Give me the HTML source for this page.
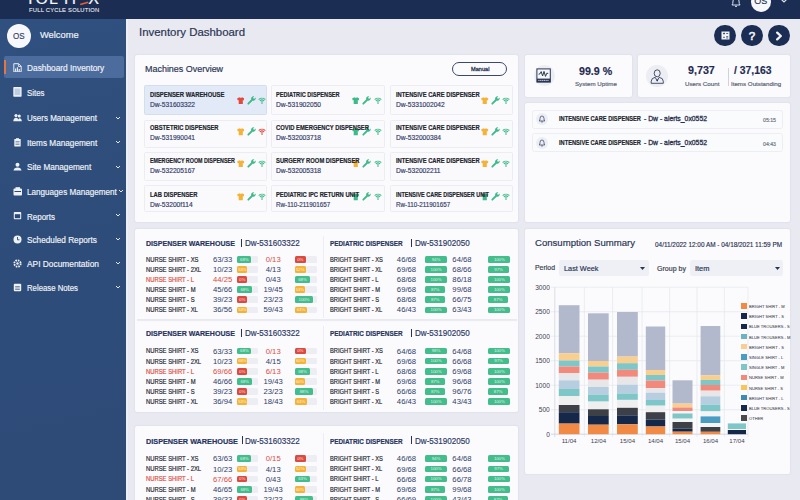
<!DOCTYPE html><html><head><meta charset="utf-8"><style>
*{box-sizing:border-box;margin:0;padding:0}
html,body{width:800px;height:500px;overflow:hidden}
body{font-family:"Liberation Sans",sans-serif;background:#e8e9f1;position:relative;color:#2a3553}
.a{position:absolute;white-space:nowrap;-webkit-text-stroke:0.18px currentColor}
.card{position:absolute;background:#fbfbfd;border-radius:2px;box-shadow:0 0 2px rgba(170,175,200,.35)}
.nv{position:absolute;color:#eef2f8;white-space:nowrap;line-height:1}
.tile{position:absolute;border-radius:1.5px;background:#fafafc;border:1px solid #ebedf2}
.tn{position:absolute;font-weight:bold;color:#262a33;white-space:nowrap;line-height:1}
.ti{position:absolute;color:#36406a;white-space:nowrap;line-height:1}
.rw{position:absolute;white-space:nowrap;line-height:1;color:#2c2f3a}
.nm{position:absolute;white-space:nowrap;line-height:1;color:#33406a;text-align:center}
.tr{position:absolute;height:6.5px;border-radius:1.5px;background:#eceef3}
.bd{position:absolute;height:6.5px;border-radius:1.5px;color:rgba(255,255,255,.85);font-size:4.4px;line-height:6.5px;text-align:center;overflow:hidden;letter-spacing:-0.1px;padding-top:0.6px}
.g{background:#42bd8b}.o{background:#f4b237}.r{background:#da4a3f}
.lg{position:absolute;width:5px;height:5px}
.lt{position:absolute;font-size:4.1px;color:#2a2d3a;white-space:nowrap;line-height:1;letter-spacing:-0.05px;-webkit-text-stroke:0.1px #2a2d3a}
</style></head><body>
<div class="a" style="left:0;top:0;width:800px;height:19px;background:#1b2d53"></div>
<div class="a" style="left:28.16px;top:-9.04px;font-size:16.00px;line-height:16.00px;color:#f4f6fa;">P</div>
<div class="a" style="left:35.53px;top:-9.04px;font-size:16.00px;line-height:16.00px;color:#f4f6fa;">O</div>
<div class="a" style="left:49.05px;top:-9.04px;font-size:16.00px;line-height:16.00px;color:#f4f6fa;">L</div>
<div class="a" style="left:60.66px;top:-9.04px;font-size:16.00px;line-height:16.00px;color:#f4f6fa;">Y</div>
<div class="a" style="left:68.91px;top:-9.04px;font-size:16.00px;line-height:16.00px;color:#f4f6fa;">T</div>
<div class="a" style="left:88.16px;top:-9.04px;font-size:16.00px;line-height:16.00px;color:#f4f6fa;">X</div>
<svg class="a" style="left:79px;top:0" width="11" height="6" viewBox="0 0 11 6"><path d="M1.2 4.6 L9.2 2.2" stroke="#e8602a" stroke-width="1.6"/></svg>
<div class="a" style="left:29.00px;top:8.19px;font-size:5.80px;line-height:5.80px;color:#e6e9f0;letter-spacing:0.23px;-webkit-text-stroke:0.1px #e6e9f0;">FULL CYCLE SOLUTION</div>
<svg class="a" style="left:730px;top:-4px" width="12" height="12" viewBox="0 0 12 12"><path d="M2 9 Q3 8 3 5 Q3 1.5 6 1.5 Q9 1.5 9 5 Q9 8 10 9 Z M5 10 Q6 11.5 7 10" fill="none" stroke="#dfe4ee" stroke-width="1"/></svg>
<div class="a" style="left:751px;top:-8px;width:20px;height:20px;border-radius:50%;background:#f7f8fb"></div>
<div class="a" style="left:754.20px;top:-3.32px;font-size:9.00px;line-height:9.00px;color:#2a3553;">OS</div>
<svg class="a" style="left:780px;top:-2px" width="8" height="6" viewBox="0 0 8 6"><path d="M1 1 L4 4 L7 1" fill="none" stroke="#dfe4ee" stroke-width="1.2"/></svg>
<div class="a" style="left:0;top:19px;width:126px;height:481px;background:linear-gradient(165deg,#30507f 0%,#2e4c79 50%,#2e4b78 100%)"></div>
<div class="a" style="left:126px;top:19px;width:2px;height:481px;background:#eff0f5"></div>
<div class="a" style="left:6.8px;top:24.4px;width:24px;height:24px;border-radius:50%;background:#f7f8fb"></div>
<div class="a" style="left:12.80px;top:32.76px;font-size:8.20px;line-height:8.20px;color:#3a4368;transform:scale(0.9791,1.0000);transform-origin:0 0;">OS</div>
<div class="a" style="left:40.40px;top:31.40px;font-size:9.10px;line-height:9.10px;color:#eef2f8;transform:scale(1.0222,1.0000);transform-origin:0 0;">Welcome</div>
<div class="a" style="left:4px;top:55.5px;width:120px;height:22.5px;border-radius:2px;background:#4b6c9d"></div>
<div class="a" style="left:4px;top:59.5px;width:1.6px;height:14px;background:#e8763a"></div>
<div class="a" style="left:26.90px;top:63.77px;font-size:8.30px;line-height:8.30px;color:#eef2f8;transform:scale(1.0032,1.0000);transform-origin:0 0;">Dashboard Inventory</div>
<svg class="a" style="left:13px;top:62.8px" width="9" height="9.5" viewBox="0 0 9 9.5"><path d="M0.8 8.8 V0.7 H5.6 L8.2 3.3 V8.8 Z" fill="none" stroke="#eef2f8" stroke-width="0.95"/><path d="M5.4 0.8 V3.5 H8.1" fill="none" stroke="#eef2f8" stroke-width="0.8"/><path d="M2.6 8.6 V5.5 M4.4 8.6 V4.2 M6.2 8.6 V6" stroke="#eef2f8" stroke-width="1.1"/></svg>
<div class="a" style="left:26.90px;top:89.47px;font-size:8.30px;line-height:8.30px;color:#eef2f8;transform:scale(0.9430,1.0000);transform-origin:0 0;">Sites</div>
<svg class="a" style="left:13px;top:87.2px" width="9" height="10" viewBox="0 0 9 10"><rect x="0.3" y="0.1" width="8.3" height="9.6" rx="0.7" fill="#eef2f8"/><rect x="1.6" y="1.5" width="5.7" height="6.6" fill="#c3cde0"/></svg>
<div class="a" style="left:26.90px;top:114.47px;font-size:8.30px;line-height:8.30px;color:#eef2f8;transform:scale(0.9665,1.0000);transform-origin:0 0;">Users Management</div>
<svg class="a" style="left:13px;top:113.1px" width="9" height="9" viewBox="0 0 9 9"><circle cx="3" cy="2.6" r="1.6" fill="#eef2f8"/><circle cx="6.3" cy="3" r="1.5" fill="#eef2f8"/><path d="M0.3 8.3 Q0.5 4.8 3 4.8 Q5.5 4.8 5.8 8.3 Z M5 8.3 Q5.5 5.2 6.5 5.2 Q8.6 5.2 8.8 8.3Z" fill="#eef2f8"/></svg>
<svg class="a" style="left:114.5px;top:115.6px" width="6" height="4" viewBox="0 0 6 4"><path d="M1 1 L3 3 L5 1" fill="none" stroke="#e6ebf3" stroke-width="1"/></svg>
<div class="a" style="left:26.90px;top:139.37px;font-size:8.30px;line-height:8.30px;color:#eef2f8;transform:scale(0.9881,1.0000);transform-origin:0 0;">Items Management</div>
<svg class="a" style="left:13px;top:137.9px" width="9" height="9" viewBox="0 0 9 9"><rect x="1.3" y="1" width="6.4" height="7.6" rx="0.6" fill="#eef2f8"/><rect x="3" y="0.2" width="3" height="1.5" fill="#eef2f8"/><path d="M2.5 3.5H6.5M2.5 5H6.5M2.5 6.5H6.5" stroke="#2c4a79" stroke-width="0.5"/></svg>
<svg class="a" style="left:114.5px;top:140.4px" width="6" height="4" viewBox="0 0 6 4"><path d="M1 1 L3 3 L5 1" fill="none" stroke="#e6ebf3" stroke-width="1"/></svg>
<div class="a" style="left:26.90px;top:163.17px;font-size:8.30px;line-height:8.30px;color:#eef2f8;transform:scale(0.9869,1.0000);transform-origin:0 0;">Site Management</div>
<svg class="a" style="left:13px;top:162.1px" width="9" height="9" viewBox="0 0 9 9"><circle cx="4.5" cy="2.8" r="2" fill="#eef2f8"/><path d="M0.5 8.5 Q1 5.5 4.5 5.5 Q8 5.5 8.5 8.5Z" fill="#eef2f8"/></svg>
<svg class="a" style="left:114.5px;top:164.6px" width="6" height="4" viewBox="0 0 6 4"><path d="M1 1 L3 3 L5 1" fill="none" stroke="#e6ebf3" stroke-width="1"/></svg>
<div class="a" style="left:26.90px;top:187.67px;font-size:8.30px;line-height:8.30px;color:#eef2f8;transform:scale(0.9790,1.0000);transform-origin:0 0;">Languages Management</div>
<svg class="a" style="left:13px;top:186.7px" width="10" height="9" viewBox="0 0 10 9"><rect x="0.5" y="1.5" width="8.5" height="7" rx="1" fill="#eef2f8"/><rect x="2.5" y="0.2" width="4.5" height="2" fill="#eef2f8"/><rect x="1.5" y="4" width="6.5" height="1" fill="#2c4a79"/></svg>
<svg class="a" style="left:117.5px;top:189.2px" width="6" height="4" viewBox="0 0 6 4"><path d="M1 1 L3 3 L5 1" fill="none" stroke="#e6ebf3" stroke-width="1"/></svg>
<div class="a" style="left:26.90px;top:212.87px;font-size:8.30px;line-height:8.30px;color:#eef2f8;transform:scale(0.9634,1.0000);transform-origin:0 0;">Reports</div>
<svg class="a" style="left:13px;top:210.7px" width="9" height="9" viewBox="0 0 9 9"><rect x="0.8" y="1" width="7.4" height="7.2" rx="0.8" fill="#eef2f8"/><rect x="1.8" y="3.2" width="5.4" height="4" fill="#2c4a79"/></svg>
<svg class="a" style="left:114.5px;top:213.2px" width="6" height="4" viewBox="0 0 6 4"><path d="M1 1 L3 3 L5 1" fill="none" stroke="#e6ebf3" stroke-width="1"/></svg>
<div class="a" style="left:26.90px;top:236.27px;font-size:8.30px;line-height:8.30px;color:#eef2f8;transform:scale(0.9916,1.0000);transform-origin:0 0;">Scheduled Reports</div>
<svg class="a" style="left:13px;top:234.9px" width="9" height="9" viewBox="0 0 9 9"><circle cx="4.5" cy="4.5" r="4" fill="#eef2f8"/><path d="M4.5 2 V4.8 H6.5" fill="none" stroke="#2c4a79" stroke-width="0.9"/></svg>
<svg class="a" style="left:114.5px;top:237.4px" width="6" height="4" viewBox="0 0 6 4"><path d="M1 1 L3 3 L5 1" fill="none" stroke="#e6ebf3" stroke-width="1"/></svg>
<div class="a" style="left:26.90px;top:260.27px;font-size:8.30px;line-height:8.30px;color:#eef2f8;transform:scale(1.0068,1.0000);transform-origin:0 0;">API Documentation</div>
<svg class="a" style="left:13px;top:258.9px" width="9" height="9" viewBox="0 0 9 9"><circle cx="4.5" cy="4.5" r="3.2" fill="none" stroke="#eef2f8" stroke-width="1.8" stroke-dasharray="1.6 0.9"/><circle cx="4.5" cy="4.5" r="1.2" fill="#eef2f8"/></svg>
<svg class="a" style="left:114.5px;top:261.4px" width="6" height="4" viewBox="0 0 6 4"><path d="M1 1 L3 3 L5 1" fill="none" stroke="#e6ebf3" stroke-width="1"/></svg>
<div class="a" style="left:26.90px;top:284.27px;font-size:8.30px;line-height:8.30px;color:#eef2f8;transform:scale(0.9368,1.0000);transform-origin:0 0;">Release Notes</div>
<svg class="a" style="left:13px;top:282.9px" width="9" height="9" viewBox="0 0 9 9"><rect x="0.8" y="0.8" width="7.4" height="7.4" rx="1" fill="#eef2f8"/><path d="M2.2 3.5H6.8M2.2 5H6.8M2.2 6.5H6.8" stroke="#2c4a79" stroke-width="0.6"/></svg>
<svg class="a" style="left:114.5px;top:285.4px" width="6" height="4" viewBox="0 0 6 4"><path d="M1 1 L3 3 L5 1" fill="none" stroke="#e6ebf3" stroke-width="1"/></svg>
<div class="a" style="left:139.20px;top:27.39px;font-size:11.00px;line-height:11.00px;color:#2a3553;transform:scale(1.0380,1.0000);transform-origin:0 0;">Inventory Dashboard</div>
<div class="a" style="left:714.2px;top:24.8px;width:21.6px;height:21.6px;border-radius:50%;background:#1b2d53"></div>
<div class="a" style="left:741.2px;top:24.8px;width:21.6px;height:21.6px;border-radius:50%;background:#1b2d53"></div>
<div class="a" style="left:768.2px;top:24.8px;width:21.6px;height:21.6px;border-radius:50%;background:#1b2d53"></div>
<svg class="a" style="left:720.5px;top:31px" width="9" height="9" viewBox="0 0 9 9"><rect x="0.5" y="0.5" width="8" height="8" fill="#f2f4f8"/><path d="M2 2.5H4M3 1.5V3.5M5.2 2.5H7.2M2 6.3L4 6.3M5.2 5.6H7.2M5.2 7H7.2" stroke="#1b2d53" stroke-width="0.7"/></svg>
<div class="a" style="left:748.80px;top:31.07px;font-size:11.50px;line-height:11.50px;color:#f2f4f8;-webkit-text-stroke:0.6px #f2f4f8;">?</div>
<svg class="a" style="left:774px;top:30.5px" width="10" height="10" viewBox="0 0 10 10"><path d="M3.2 1.6 L6.8 5 L3.2 8.4" fill="none" stroke="#f2f4f8" stroke-width="2.3" stroke-linecap="round" stroke-linejoin="round"/></svg>
<div class="card" style="left:135px;top:55.3px;width:383px;height:166.5px"></div>
<div class="a" style="left:144.70px;top:64.87px;font-size:8.90px;line-height:8.90px;color:#2a3553;transform:scale(1.0083,1.0000);transform-origin:0 0;">Machines Overview</div>
<div class="a" style="left:452.2px;top:62.2px;width:54.6px;height:13.6px;border-radius:7px;border:1px solid #3b4671"></div>
<div class="a" style="left:470.80px;top:66.69px;font-size:5.80px;line-height:5.80px;color:#2a3553;transform:scale(0.9673,1.0000);transform-origin:0 0;-webkit-text-stroke:0.3px #2a3553;">Manual</div>
<div class="tile" style="left:144px;top:85.2px;width:123.2px;height:29.8px;background:#e2eaf7;border-color:#d3def0"></div>
<svg class="a" style="left:236.70px;top:96.75px" width="7.5" height="7.5" viewBox="0 0 8 8"><path d="M2.6 0.3 L0.1 1.7 L0.9 3.7 L1.8 3.3 V7.8 H6.2 V3.3 L7.1 3.7 L7.9 1.7 L5.4 0.3 Q4 1.5 2.6 0.3Z" fill="#e04a3f"/></svg>
<svg class="a" style="left:246.70px;top:96.00px" width="9" height="9" viewBox="0 0 9 9"><path d="M1.3 7.7 L5 4" stroke="#3dba89" stroke-width="1.8" stroke-linecap="round"/><path d="M4.3 3.4 A2.3 2.3 0 0 1 7.3 0.4 L6 1.8 L7.1 2.9 L8.5 1.6 A2.3 2.3 0 0 1 5.5 4.6Z" fill="#3dba89"/></svg>
<svg class="a" style="left:257.70px;top:97.10px" width="8" height="7" viewBox="0 0 8 7"><path d="M0.7 2.6 A4.8 4.8 0 0 1 7.3 2.6" fill="none" stroke="#3dba89" stroke-width="1.1"/><path d="M1.9 3.9 A3 3 0 0 1 6.1 3.9" fill="none" stroke="#3dba89" stroke-width="1.1"/><path d="M3 5.1 A1.4 1.4 0 0 1 5 5.1" fill="none" stroke="#3dba89" stroke-width="1.1"/><circle cx="4" cy="6.3" r="0.7" fill="#3dba89"/></svg>
<div class="a" style="left:150.30px;top:91.91px;font-size:6.60px;line-height:6.60px;color:#23262e;font-weight:bold;transform:scale(0.8937,1.0000);transform-origin:0 0;">DISPENSER WAREHOUSE</div>
<div class="a" style="left:150.30px;top:101.32px;font-size:7.30px;line-height:7.30px;color:#35406b;transform:scale(0.9100,1.0000);transform-origin:0 0;">Dw-531603322</div>
<div class="tile" style="left:270.5px;top:85.2px;width:114px;height:29.8px"></div>
<svg class="a" style="left:351.50px;top:96.75px" width="7.5" height="7.5" viewBox="0 0 8 8"><path d="M2.6 0.3 L0.1 1.7 L0.9 3.7 L1.8 3.3 V7.8 H6.2 V3.3 L7.1 3.7 L7.9 1.7 L5.4 0.3 Q4 1.5 2.6 0.3Z" fill="#3dba89"/></svg>
<svg class="a" style="left:361.80px;top:96.00px" width="9" height="9" viewBox="0 0 9 9"><path d="M1.3 7.7 L5 4" stroke="#3dba89" stroke-width="1.8" stroke-linecap="round"/><path d="M4.3 3.4 A2.3 2.3 0 0 1 7.3 0.4 L6 1.8 L7.1 2.9 L8.5 1.6 A2.3 2.3 0 0 1 5.5 4.6Z" fill="#3dba89"/></svg>
<svg class="a" style="left:373.70px;top:97.10px" width="8" height="7" viewBox="0 0 8 7"><path d="M0.7 2.6 A4.8 4.8 0 0 1 7.3 2.6" fill="none" stroke="#3dba89" stroke-width="1.1"/><path d="M1.9 3.9 A3 3 0 0 1 6.1 3.9" fill="none" stroke="#3dba89" stroke-width="1.1"/><path d="M3 5.1 A1.4 1.4 0 0 1 5 5.1" fill="none" stroke="#3dba89" stroke-width="1.1"/><circle cx="4" cy="6.3" r="0.7" fill="#3dba89"/></svg>
<div class="a" style="left:275.80px;top:91.91px;font-size:6.60px;line-height:6.60px;color:#23262e;font-weight:bold;transform:scale(0.8487,1.0000);transform-origin:0 0;">PEDIATRIC DISPENSER</div>
<div class="a" style="left:275.80px;top:101.32px;font-size:7.30px;line-height:7.30px;color:#35406b;transform:scale(0.9100,1.0000);transform-origin:0 0;">Dw-531902050</div>
<div class="tile" style="left:389.5px;top:85.2px;width:123px;height:29.8px"></div>
<svg class="a" style="left:481.10px;top:96.75px" width="7.5" height="7.5" viewBox="0 0 8 8"><path d="M2.6 0.3 L0.1 1.7 L0.9 3.7 L1.8 3.3 V7.8 H6.2 V3.3 L7.1 3.7 L7.9 1.7 L5.4 0.3 Q4 1.5 2.6 0.3Z" fill="#f4b237"/></svg>
<svg class="a" style="left:491.30px;top:96.00px" width="9" height="9" viewBox="0 0 9 9"><path d="M1.3 7.7 L5 4" stroke="#3dba89" stroke-width="1.8" stroke-linecap="round"/><path d="M4.3 3.4 A2.3 2.3 0 0 1 7.3 0.4 L6 1.8 L7.1 2.9 L8.5 1.6 A2.3 2.3 0 0 1 5.5 4.6Z" fill="#3dba89"/></svg>
<svg class="a" style="left:501.70px;top:97.10px" width="8" height="7" viewBox="0 0 8 7"><path d="M0.7 2.6 A4.8 4.8 0 0 1 7.3 2.6" fill="none" stroke="#3dba89" stroke-width="1.1"/><path d="M1.9 3.9 A3 3 0 0 1 6.1 3.9" fill="none" stroke="#3dba89" stroke-width="1.1"/><path d="M3 5.1 A1.4 1.4 0 0 1 5 5.1" fill="none" stroke="#3dba89" stroke-width="1.1"/><circle cx="4" cy="6.3" r="0.7" fill="#3dba89"/></svg>
<div class="a" style="left:395.80px;top:91.91px;font-size:6.60px;line-height:6.60px;color:#23262e;font-weight:bold;transform:scale(0.8783,1.0000);transform-origin:0 0;">INTENSIVE CARE DISPENSER</div>
<div class="a" style="left:395.80px;top:101.32px;font-size:7.30px;line-height:7.30px;color:#35406b;transform:scale(0.9100,1.0000);transform-origin:0 0;">Dw-5331002042</div>
<div class="tile" style="left:144px;top:119.5px;width:123.2px;height:28.6px"></div>
<svg class="a" style="left:236.70px;top:128.00px" width="7.5" height="7.5" viewBox="0 0 8 8"><path d="M2.6 0.3 L0.1 1.7 L0.9 3.7 L1.8 3.3 V7.8 H6.2 V3.3 L7.1 3.7 L7.9 1.7 L5.4 0.3 Q4 1.5 2.6 0.3Z" fill="#f4b237"/></svg>
<svg class="a" style="left:246.70px;top:127.25px" width="9" height="9" viewBox="0 0 9 9"><path d="M1.3 7.7 L5 4" stroke="#3dba89" stroke-width="1.8" stroke-linecap="round"/><path d="M4.3 3.4 A2.3 2.3 0 0 1 7.3 0.4 L6 1.8 L7.1 2.9 L8.5 1.6 A2.3 2.3 0 0 1 5.5 4.6Z" fill="#3dba89"/></svg>
<svg class="a" style="left:257.70px;top:128.35px" width="8" height="7" viewBox="0 0 8 7"><path d="M0.7 2.6 A4.8 4.8 0 0 1 7.3 2.6" fill="none" stroke="#e04a3f" stroke-width="1.1"/><path d="M1.9 3.9 A3 3 0 0 1 6.1 3.9" fill="none" stroke="#e04a3f" stroke-width="1.1"/><path d="M3 5.1 A1.4 1.4 0 0 1 5 5.1" fill="none" stroke="#e04a3f" stroke-width="1.1"/><circle cx="4" cy="6.3" r="0.7" fill="#e04a3f"/></svg>
<div class="a" style="left:150.30px;top:125.11px;font-size:6.60px;line-height:6.60px;color:#23262e;font-weight:bold;transform:scale(0.8782,1.0000);transform-origin:0 0;">OBSTETRIC DISPENSER</div>
<div class="a" style="left:150.30px;top:134.32px;font-size:7.30px;line-height:7.30px;color:#35406b;transform:scale(0.9100,1.0000);transform-origin:0 0;">Dw-531990041</div>
<div class="tile" style="left:270.5px;top:119.5px;width:114px;height:28.6px"></div>
<svg class="a" style="left:351.50px;top:128.00px" width="7.5" height="7.5" viewBox="0 0 8 8"><path d="M2.6 0.3 L0.1 1.7 L0.9 3.7 L1.8 3.3 V7.8 H6.2 V3.3 L7.1 3.7 L7.9 1.7 L5.4 0.3 Q4 1.5 2.6 0.3Z" fill="#3dba89"/></svg>
<svg class="a" style="left:361.80px;top:127.25px" width="9" height="9" viewBox="0 0 9 9"><path d="M1.3 7.7 L5 4" stroke="#3dba89" stroke-width="1.8" stroke-linecap="round"/><path d="M4.3 3.4 A2.3 2.3 0 0 1 7.3 0.4 L6 1.8 L7.1 2.9 L8.5 1.6 A2.3 2.3 0 0 1 5.5 4.6Z" fill="#3dba89"/></svg>
<svg class="a" style="left:373.70px;top:128.35px" width="8" height="7" viewBox="0 0 8 7"><path d="M0.7 2.6 A4.8 4.8 0 0 1 7.3 2.6" fill="none" stroke="#3dba89" stroke-width="1.1"/><path d="M1.9 3.9 A3 3 0 0 1 6.1 3.9" fill="none" stroke="#3dba89" stroke-width="1.1"/><path d="M3 5.1 A1.4 1.4 0 0 1 5 5.1" fill="none" stroke="#3dba89" stroke-width="1.1"/><circle cx="4" cy="6.3" r="0.7" fill="#3dba89"/></svg>
<div class="a" style="left:275.80px;top:125.11px;font-size:6.60px;line-height:6.60px;color:#23262e;font-weight:bold;transform:scale(0.8846,1.0000);transform-origin:0 0;">COVID EMERGENCY DISPENSER</div>
<div class="a" style="left:275.80px;top:134.32px;font-size:7.30px;line-height:7.30px;color:#35406b;transform:scale(0.9100,1.0000);transform-origin:0 0;">Dw-532003718</div>
<div class="tile" style="left:389.5px;top:119.5px;width:123px;height:28.6px"></div>
<svg class="a" style="left:481.10px;top:128.00px" width="7.5" height="7.5" viewBox="0 0 8 8"><path d="M2.6 0.3 L0.1 1.7 L0.9 3.7 L1.8 3.3 V7.8 H6.2 V3.3 L7.1 3.7 L7.9 1.7 L5.4 0.3 Q4 1.5 2.6 0.3Z" fill="#f4b237"/></svg>
<svg class="a" style="left:491.30px;top:127.25px" width="9" height="9" viewBox="0 0 9 9"><path d="M1.3 7.7 L5 4" stroke="#3dba89" stroke-width="1.8" stroke-linecap="round"/><path d="M4.3 3.4 A2.3 2.3 0 0 1 7.3 0.4 L6 1.8 L7.1 2.9 L8.5 1.6 A2.3 2.3 0 0 1 5.5 4.6Z" fill="#3dba89"/></svg>
<svg class="a" style="left:501.70px;top:128.35px" width="8" height="7" viewBox="0 0 8 7"><path d="M0.7 2.6 A4.8 4.8 0 0 1 7.3 2.6" fill="none" stroke="#3dba89" stroke-width="1.1"/><path d="M1.9 3.9 A3 3 0 0 1 6.1 3.9" fill="none" stroke="#3dba89" stroke-width="1.1"/><path d="M3 5.1 A1.4 1.4 0 0 1 5 5.1" fill="none" stroke="#3dba89" stroke-width="1.1"/><circle cx="4" cy="6.3" r="0.7" fill="#3dba89"/></svg>
<div class="a" style="left:395.80px;top:125.11px;font-size:6.60px;line-height:6.60px;color:#23262e;font-weight:bold;transform:scale(0.8783,1.0000);transform-origin:0 0;">INTENSIVE CARE DISPENSER</div>
<div class="a" style="left:395.80px;top:134.32px;font-size:7.30px;line-height:7.30px;color:#35406b;transform:scale(0.9100,1.0000);transform-origin:0 0;">Dw-532000384</div>
<div class="tile" style="left:144px;top:151.6px;width:123.2px;height:29.0px"></div>
<svg class="a" style="left:236.70px;top:159.65px" width="7.5" height="7.5" viewBox="0 0 8 8"><path d="M2.6 0.3 L0.1 1.7 L0.9 3.7 L1.8 3.3 V7.8 H6.2 V3.3 L7.1 3.7 L7.9 1.7 L5.4 0.3 Q4 1.5 2.6 0.3Z" fill="#f4b237"/></svg>
<svg class="a" style="left:246.70px;top:158.90px" width="9" height="9" viewBox="0 0 9 9"><path d="M1.3 7.7 L5 4" stroke="#3dba89" stroke-width="1.8" stroke-linecap="round"/><path d="M4.3 3.4 A2.3 2.3 0 0 1 7.3 0.4 L6 1.8 L7.1 2.9 L8.5 1.6 A2.3 2.3 0 0 1 5.5 4.6Z" fill="#3dba89"/></svg>
<svg class="a" style="left:257.70px;top:160.00px" width="8" height="7" viewBox="0 0 8 7"><path d="M0.7 2.6 A4.8 4.8 0 0 1 7.3 2.6" fill="none" stroke="#3dba89" stroke-width="1.1"/><path d="M1.9 3.9 A3 3 0 0 1 6.1 3.9" fill="none" stroke="#3dba89" stroke-width="1.1"/><path d="M3 5.1 A1.4 1.4 0 0 1 5 5.1" fill="none" stroke="#3dba89" stroke-width="1.1"/><circle cx="4" cy="6.3" r="0.7" fill="#3dba89"/></svg>
<div class="a" style="left:150.30px;top:157.71px;font-size:6.60px;line-height:6.60px;color:#23262e;font-weight:bold;transform:scale(0.8114,1.0000);transform-origin:0 0;">EMERGENCY ROOM DISPENSER</div>
<div class="a" style="left:150.30px;top:166.52px;font-size:7.30px;line-height:7.30px;color:#35406b;transform:scale(0.9100,1.0000);transform-origin:0 0;">Dw-532205167</div>
<div class="tile" style="left:270.5px;top:151.6px;width:114px;height:29.0px"></div>
<svg class="a" style="left:351.50px;top:159.65px" width="7.5" height="7.5" viewBox="0 0 8 8"><path d="M2.6 0.3 L0.1 1.7 L0.9 3.7 L1.8 3.3 V7.8 H6.2 V3.3 L7.1 3.7 L7.9 1.7 L5.4 0.3 Q4 1.5 2.6 0.3Z" fill="#f4b237"/></svg>
<svg class="a" style="left:361.80px;top:158.90px" width="9" height="9" viewBox="0 0 9 9"><path d="M1.3 7.7 L5 4" stroke="#3dba89" stroke-width="1.8" stroke-linecap="round"/><path d="M4.3 3.4 A2.3 2.3 0 0 1 7.3 0.4 L6 1.8 L7.1 2.9 L8.5 1.6 A2.3 2.3 0 0 1 5.5 4.6Z" fill="#3dba89"/></svg>
<svg class="a" style="left:373.70px;top:160.00px" width="8" height="7" viewBox="0 0 8 7"><path d="M0.7 2.6 A4.8 4.8 0 0 1 7.3 2.6" fill="none" stroke="#3dba89" stroke-width="1.1"/><path d="M1.9 3.9 A3 3 0 0 1 6.1 3.9" fill="none" stroke="#3dba89" stroke-width="1.1"/><path d="M3 5.1 A1.4 1.4 0 0 1 5 5.1" fill="none" stroke="#3dba89" stroke-width="1.1"/><circle cx="4" cy="6.3" r="0.7" fill="#3dba89"/></svg>
<div class="a" style="left:275.80px;top:157.71px;font-size:6.60px;line-height:6.60px;color:#23262e;font-weight:bold;transform:scale(0.8836,1.0000);transform-origin:0 0;">SURGERY ROOM DISPENSER</div>
<div class="a" style="left:275.80px;top:166.52px;font-size:7.30px;line-height:7.30px;color:#35406b;transform:scale(0.9100,1.0000);transform-origin:0 0;">Dw-532005318</div>
<div class="tile" style="left:389.5px;top:151.6px;width:123px;height:29.0px"></div>
<svg class="a" style="left:481.10px;top:159.65px" width="7.5" height="7.5" viewBox="0 0 8 8"><path d="M2.6 0.3 L0.1 1.7 L0.9 3.7 L1.8 3.3 V7.8 H6.2 V3.3 L7.1 3.7 L7.9 1.7 L5.4 0.3 Q4 1.5 2.6 0.3Z" fill="#f4b237"/></svg>
<svg class="a" style="left:491.30px;top:158.90px" width="9" height="9" viewBox="0 0 9 9"><path d="M1.3 7.7 L5 4" stroke="#3dba89" stroke-width="1.8" stroke-linecap="round"/><path d="M4.3 3.4 A2.3 2.3 0 0 1 7.3 0.4 L6 1.8 L7.1 2.9 L8.5 1.6 A2.3 2.3 0 0 1 5.5 4.6Z" fill="#3dba89"/></svg>
<svg class="a" style="left:501.70px;top:160.00px" width="8" height="7" viewBox="0 0 8 7"><path d="M0.7 2.6 A4.8 4.8 0 0 1 7.3 2.6" fill="none" stroke="#3dba89" stroke-width="1.1"/><path d="M1.9 3.9 A3 3 0 0 1 6.1 3.9" fill="none" stroke="#3dba89" stroke-width="1.1"/><path d="M3 5.1 A1.4 1.4 0 0 1 5 5.1" fill="none" stroke="#3dba89" stroke-width="1.1"/><circle cx="4" cy="6.3" r="0.7" fill="#3dba89"/></svg>
<div class="a" style="left:395.80px;top:157.71px;font-size:6.60px;line-height:6.60px;color:#23262e;font-weight:bold;transform:scale(0.8783,1.0000);transform-origin:0 0;">INTENSIVE CARE DISPENSER</div>
<div class="a" style="left:395.80px;top:166.52px;font-size:7.30px;line-height:7.30px;color:#35406b;transform:scale(0.9100,1.0000);transform-origin:0 0;">Dw-532002211</div>
<div class="tile" style="left:144px;top:184.6px;width:123.2px;height:27.6px"></div>
<svg class="a" style="left:236.70px;top:193.00px" width="7.5" height="7.5" viewBox="0 0 8 8"><path d="M2.6 0.3 L0.1 1.7 L0.9 3.7 L1.8 3.3 V7.8 H6.2 V3.3 L7.1 3.7 L7.9 1.7 L5.4 0.3 Q4 1.5 2.6 0.3Z" fill="#f4b237"/></svg>
<svg class="a" style="left:246.70px;top:192.25px" width="9" height="9" viewBox="0 0 9 9"><path d="M1.3 7.7 L5 4" stroke="#3dba89" stroke-width="1.8" stroke-linecap="round"/><path d="M4.3 3.4 A2.3 2.3 0 0 1 7.3 0.4 L6 1.8 L7.1 2.9 L8.5 1.6 A2.3 2.3 0 0 1 5.5 4.6Z" fill="#3dba89"/></svg>
<svg class="a" style="left:257.70px;top:193.35px" width="8" height="7" viewBox="0 0 8 7"><path d="M0.7 2.6 A4.8 4.8 0 0 1 7.3 2.6" fill="none" stroke="#3dba89" stroke-width="1.1"/><path d="M1.9 3.9 A3 3 0 0 1 6.1 3.9" fill="none" stroke="#3dba89" stroke-width="1.1"/><path d="M3 5.1 A1.4 1.4 0 0 1 5 5.1" fill="none" stroke="#3dba89" stroke-width="1.1"/><circle cx="4" cy="6.3" r="0.7" fill="#3dba89"/></svg>
<div class="a" style="left:150.30px;top:191.71px;font-size:6.60px;line-height:6.60px;color:#23262e;font-weight:bold;transform:scale(0.8872,1.0000);transform-origin:0 0;">LAB DISPENSER</div>
<div class="a" style="left:150.30px;top:200.82px;font-size:7.30px;line-height:7.30px;color:#35406b;transform:scale(0.9100,1.0000);transform-origin:0 0;">Dw-53200f114</div>
<div class="tile" style="left:270.5px;top:184.6px;width:114px;height:27.6px"></div>
<svg class="a" style="left:351.50px;top:193.00px" width="7.5" height="7.5" viewBox="0 0 8 8"><path d="M2.6 0.3 L0.1 1.7 L0.9 3.7 L1.8 3.3 V7.8 H6.2 V3.3 L7.1 3.7 L7.9 1.7 L5.4 0.3 Q4 1.5 2.6 0.3Z" fill="#3dba89"/></svg>
<svg class="a" style="left:361.80px;top:192.25px" width="9" height="9" viewBox="0 0 9 9"><path d="M1.3 7.7 L5 4" stroke="#3dba89" stroke-width="1.8" stroke-linecap="round"/><path d="M4.3 3.4 A2.3 2.3 0 0 1 7.3 0.4 L6 1.8 L7.1 2.9 L8.5 1.6 A2.3 2.3 0 0 1 5.5 4.6Z" fill="#3dba89"/></svg>
<svg class="a" style="left:373.70px;top:193.35px" width="8" height="7" viewBox="0 0 8 7"><path d="M0.7 2.6 A4.8 4.8 0 0 1 7.3 2.6" fill="none" stroke="#3dba89" stroke-width="1.1"/><path d="M1.9 3.9 A3 3 0 0 1 6.1 3.9" fill="none" stroke="#3dba89" stroke-width="1.1"/><path d="M3 5.1 A1.4 1.4 0 0 1 5 5.1" fill="none" stroke="#3dba89" stroke-width="1.1"/><circle cx="4" cy="6.3" r="0.7" fill="#3dba89"/></svg>
<div class="a" style="left:275.80px;top:191.71px;font-size:6.60px;line-height:6.60px;color:#23262e;font-weight:bold;transform:scale(0.8785,1.0000);transform-origin:0 0;">PEDIATRIC IPC RETURN UNIT</div>
<div class="a" style="left:275.80px;top:200.82px;font-size:7.30px;line-height:7.30px;color:#35406b;transform:scale(0.8600,1.0000);transform-origin:0 0;">Rw-110-211901657</div>
<div class="tile" style="left:389.5px;top:184.6px;width:123px;height:27.6px"></div>
<svg class="a" style="left:481.10px;top:193.00px" width="7.5" height="7.5" viewBox="0 0 8 8"><path d="M2.6 0.3 L0.1 1.7 L0.9 3.7 L1.8 3.3 V7.8 H6.2 V3.3 L7.1 3.7 L7.9 1.7 L5.4 0.3 Q4 1.5 2.6 0.3Z" fill="#3dba89"/></svg>
<svg class="a" style="left:491.30px;top:192.25px" width="9" height="9" viewBox="0 0 9 9"><path d="M1.3 7.7 L5 4" stroke="#3dba89" stroke-width="1.8" stroke-linecap="round"/><path d="M4.3 3.4 A2.3 2.3 0 0 1 7.3 0.4 L6 1.8 L7.1 2.9 L8.5 1.6 A2.3 2.3 0 0 1 5.5 4.6Z" fill="#3dba89"/></svg>
<svg class="a" style="left:501.70px;top:193.35px" width="8" height="7" viewBox="0 0 8 7"><path d="M0.7 2.6 A4.8 4.8 0 0 1 7.3 2.6" fill="none" stroke="#3dba89" stroke-width="1.1"/><path d="M1.9 3.9 A3 3 0 0 1 6.1 3.9" fill="none" stroke="#3dba89" stroke-width="1.1"/><path d="M3 5.1 A1.4 1.4 0 0 1 5 5.1" fill="none" stroke="#3dba89" stroke-width="1.1"/><circle cx="4" cy="6.3" r="0.7" fill="#3dba89"/></svg>
<div class="a" style="left:395.80px;top:191.71px;font-size:6.60px;line-height:6.60px;color:#23262e;font-weight:bold;transform:scale(0.8260,1.0000);transform-origin:0 0;">INTENSIVE CARE DISPENSER UNIT</div>
<div class="a" style="left:395.80px;top:200.82px;font-size:7.30px;line-height:7.30px;color:#35406b;transform:scale(0.8600,1.0000);transform-origin:0 0;">Rw-110-211901657</div>
<div class="card" style="left:525px;top:55px;width:107px;height:42px"></div>
<div class="card" style="left:638px;top:55px;width:152px;height:42px"></div>
<div class="a" style="left:533.8px;top:64.6px;width:21.6px;height:21.8px;border-radius:50%;background:#eceef3"></div>
<svg class="a" style="left:536.4px;top:68.4px" width="15" height="15" viewBox="0 0 15 15"><rect x="0.9" y="0.9" width="13.4" height="13.2" fill="#f5f7fb" stroke="#2a3553" stroke-width="1"/><rect x="0.9" y="10.6" width="13.4" height="3.5" fill="#2a3553"/><path d="M2.3 12.4H12.8" stroke="#f5f7fb" stroke-width="0.8" stroke-dasharray="1.3 0.5"/><path d="M2.6 6.2 L4 5.8 L5.2 3.6 L6.6 8 L8 3.4 L9.5 8.4 L10.8 5.2 L12.2 5.4" fill="none" stroke="#2a3553" stroke-width="1"/></svg>
<div class="a" style="left:579.25px;top:65.63px;font-size:10.60px;line-height:10.60px;color:#1f2b52;font-weight:bold;transform:scale(1.0060,1.0000);transform-origin:0 0;">99.9 %</div>
<div class="a" style="left:574.80px;top:81.25px;font-size:6.20px;line-height:6.20px;color:#5a5f73;transform:scale(0.9969,1.0000);transform-origin:0 0;">System Uptime</div>
<div class="a" style="left:646.1px;top:65px;width:22.4px;height:22.4px;border-radius:50%;background:#eceef3"></div>
<svg class="a" style="left:650px;top:68.5px" width="15" height="15" viewBox="0 0 15 15"><ellipse cx="7.2" cy="4.3" rx="3" ry="3.5" fill="none" stroke="#2a3553" stroke-width="0.85"/><path d="M1.2 14.3 V12.3 Q1.3 9 5.2 8.3 L7.2 12 L9.2 8.3 Q13.2 9 13.3 12.3 V14.3 Z" fill="none" stroke="#2a3553" stroke-width="0.85"/><path d="M7.2 9.6 L6.6 11.8 L7.2 12.8 L7.8 11.8 Z" fill="#2a3553"/></svg>
<div class="a" style="left:687.60px;top:65.39px;font-size:11.00px;line-height:11.00px;color:#1f2b52;font-weight:bold;transform:scale(0.9736,1.0000);transform-origin:0 0;">9,737</div>
<div class="a" style="left:728.2px;top:67.6px;width:0.8px;height:18.5px;background:#cfd3de"></div>
<div class="a" style="left:733.60px;top:65.39px;font-size:11.00px;line-height:11.00px;color:#1f2b52;font-weight:bold;transform:scale(0.9407,1.0000);transform-origin:0 0;">/ 37,163</div>
<div class="a" style="left:684.80px;top:81.44px;font-size:6.10px;line-height:6.10px;color:#5a5f73;transform:scale(1.0147,1.0000);transform-origin:0 0;">Users Count</div>
<div class="a" style="left:730.90px;top:81.44px;font-size:6.10px;line-height:6.10px;color:#5a5f73;transform:scale(1.0141,1.0000);transform-origin:0 0;">Items Outstanding</div>
<div class="card" style="left:525px;top:102.8px;width:265px;height:119.2px"></div>
<div class="a" style="left:532.3px;top:109.5px;width:250.7px;height:19.5px;border:1px solid #eceef3;border-radius:2.5px;background:#fafbfc"></div>
<div class="a" style="left:535.9px;top:112.50px;width:12.4px;height:12.4px;border-radius:50%;background:#eceef3"></div>
<svg class="a" style="left:538.1px;top:114.70px" width="8" height="8" viewBox="0 0 8 8"><path d="M1.3 6 Q2 5.3 2 3.5 Q2 1 4 1 Q6 1 6 3.5 Q6 5.3 6.7 6 Z M3.2 6.8 Q4 7.6 4.8 6.8" fill="none" stroke="#3a4368" stroke-width="0.75"/></svg>
<div class="a" style="left:559.40px;top:116.04px;font-size:6.80px;line-height:6.80px;color:#23262e;font-weight:bold;transform:scale(0.8347,1.0000);transform-origin:0 0;">INTENSIVE CARE DISPENSER</div>
<div class="a" style="left:644.20px;top:116.04px;font-size:6.80px;line-height:6.80px;color:#2a3050;transform:scale(1.0042,1.0000);transform-origin:0 0;-webkit-text-stroke:0.3px #2a3050;">- Dw - alerts_0x0552</div>
<div class="a" style="left:763.00px;top:116.55px;font-size:6.20px;line-height:6.20px;color:#6a6f80;transform:scale(0.8379,1.0000);transform-origin:0 0;">05:15</div>
<div class="a" style="left:532.3px;top:133.3px;width:250.7px;height:18.8px;border:1px solid #eceef3;border-radius:2.5px;background:#fafbfc"></div>
<div class="a" style="left:535.9px;top:136.50px;width:12.4px;height:12.4px;border-radius:50%;background:#eceef3"></div>
<svg class="a" style="left:538.1px;top:138.70px" width="8" height="8" viewBox="0 0 8 8"><path d="M1.3 6 Q2 5.3 2 3.5 Q2 1 4 1 Q6 1 6 3.5 Q6 5.3 6.7 6 Z M3.2 6.8 Q4 7.6 4.8 6.8" fill="none" stroke="#3a4368" stroke-width="0.75"/></svg>
<div class="a" style="left:559.40px;top:140.04px;font-size:6.80px;line-height:6.80px;color:#23262e;font-weight:bold;transform:scale(0.8347,1.0000);transform-origin:0 0;">INTENSIVE CARE DISPENSER</div>
<div class="a" style="left:644.20px;top:140.04px;font-size:6.80px;line-height:6.80px;color:#2a3050;transform:scale(1.0042,1.0000);transform-origin:0 0;-webkit-text-stroke:0.3px #2a3050;">- Dw - alerts_0x0552</div>
<div class="a" style="left:763.00px;top:140.55px;font-size:6.20px;line-height:6.20px;color:#6a6f80;transform:scale(0.8379,1.0000);transform-origin:0 0;">04:43</div>
<div class="card" style="left:135px;top:229px;width:383px;height:183px"></div>
<div class="a" style="left:137px;top:318.8px;width:380px;height:1px;background:#e8eaf0;box-shadow:0 1px 1px rgba(200,205,220,.4)"></div>
<div class="card" style="left:135px;top:426.2px;width:383px;height:80px"></div>
<div class="a" style="left:323.2px;top:236px;width:0.9px;height:82px;background:#eceef3"></div>
<div class="a" style="left:145.60px;top:240.24px;font-size:7.40px;line-height:7.40px;color:#26335e;font-weight:bold;transform:scale(0.9535,1.0000);transform-origin:0 0;">DISPENSER WAREHOUSE</div>
<div class="a" style="left:241.0px;top:239.0px;width:0.9px;height:8.2px;background:#26335e"></div>
<div class="a" style="left:244.70px;top:239.22px;font-size:8.60px;line-height:8.60px;color:#2f3a66;transform:scale(0.9377,1.0000);transform-origin:0 0;">Dw-531603322</div>
<div class="a" style="left:330.30px;top:240.24px;font-size:7.40px;line-height:7.40px;color:#26335e;font-weight:bold;transform:scale(0.8627,1.0000);transform-origin:0 0;">PEDIATRIC DISPENSER</div>
<div class="a" style="left:411.1px;top:239.0px;width:0.9px;height:8.2px;background:#26335e"></div>
<div class="a" style="left:414.60px;top:239.22px;font-size:8.60px;line-height:8.60px;color:#2f3a66;transform:scale(0.9395,1.0000);transform-origin:0 0;">Dw-531902050</div>
<div class="a" style="left:145.50px;top:256.60px;font-size:6.50px;line-height:6.50px;color:#24262f;transform:scale(0.9009,1.0000);transform-origin:0 0;">NURSE SHIRT - XS</div>
<div class="a" style="left:213.07px;top:255.98px;font-size:7.70px;line-height:7.70px;color:#2f3b68;-webkit-text-stroke:0;">63/33</div>
<div class="tr" style="left:237.3px;top:256.00px;width:21.2px"></div>
<div class="bd g" style="left:237.3px;top:256.00px;width:14px">68%</div>
<div class="a" style="left:265.71px;top:255.98px;font-size:7.70px;line-height:7.70px;color:#dd4b41;-webkit-text-stroke:0;">0/13</div>
<div class="tr" style="left:295px;top:256.00px;width:21.7px"></div>
<div class="bd r" style="left:295px;top:256.00px;width:10.5px">0%</div>
<div class="a" style="left:330.30px;top:256.60px;font-size:6.50px;line-height:6.50px;color:#24262f;transform:scale(0.8822,1.0000);transform-origin:0 0;">BRIGHT SHIRT - XS</div>
<div class="a" style="left:396.87px;top:255.98px;font-size:7.70px;line-height:7.70px;color:#2f3b68;-webkit-text-stroke:0;">46/68</div>
<div class="bd g" style="left:425.4px;top:256.00px;width:21.3px">94%</div>
<div class="a" style="left:452.37px;top:255.98px;font-size:7.70px;line-height:7.70px;color:#2f3b68;-webkit-text-stroke:0;">64/68</div>
<div class="bd g" style="left:488.3px;top:256.00px;width:22px">100%</div>
<div class="a" style="left:145.50px;top:266.70px;font-size:6.50px;line-height:6.50px;color:#24262f;transform:scale(0.9009,1.0000);transform-origin:0 0;">NURSE SHIRT - 2XL</div>
<div class="a" style="left:213.07px;top:266.08px;font-size:7.70px;line-height:7.70px;color:#2f3b68;-webkit-text-stroke:0;">10/23</div>
<div class="tr" style="left:237.3px;top:266.10px;width:21.2px"></div>
<div class="bd o" style="left:237.3px;top:266.10px;width:10.2px">53%</div>
<div class="a" style="left:265.71px;top:266.08px;font-size:7.70px;line-height:7.70px;color:#2f3b68;-webkit-text-stroke:0;">4/13</div>
<div class="tr" style="left:295px;top:266.10px;width:21.7px"></div>
<div class="bd o" style="left:295px;top:266.10px;width:10.5px">52%</div>
<div class="a" style="left:330.30px;top:266.70px;font-size:6.50px;line-height:6.50px;color:#24262f;transform:scale(0.8822,1.0000);transform-origin:0 0;">BRIGHT SHIRT - XL</div>
<div class="a" style="left:396.87px;top:266.08px;font-size:7.70px;line-height:7.70px;color:#2f3b68;-webkit-text-stroke:0;">69/68</div>
<div class="bd g" style="left:425.4px;top:266.10px;width:21.3px">100%</div>
<div class="a" style="left:452.37px;top:266.08px;font-size:7.70px;line-height:7.70px;color:#2f3b68;-webkit-text-stroke:0;">68/66</div>
<div class="bd g" style="left:488.3px;top:266.10px;width:20.5px">97%</div>
<div class="a" style="left:145.50px;top:276.80px;font-size:6.50px;line-height:6.50px;color:#dd4b41;transform:scale(0.9009,1.0000);transform-origin:0 0;">NURSE SHIRT - L</div>
<div class="a" style="left:213.07px;top:276.18px;font-size:7.70px;line-height:7.70px;color:#dd4b41;-webkit-text-stroke:0;">44/25</div>
<div class="tr" style="left:237.3px;top:276.20px;width:21.2px"></div>
<div class="bd r" style="left:237.3px;top:276.20px;width:9.7px">0%</div>
<div class="a" style="left:265.71px;top:276.18px;font-size:7.70px;line-height:7.70px;color:#2f3b68;-webkit-text-stroke:0;">0/43</div>
<div class="tr" style="left:295px;top:276.20px;width:21.7px"></div>
<div class="bd g" style="left:295px;top:276.20px;width:15px">68%</div>
<div class="a" style="left:330.30px;top:276.80px;font-size:6.50px;line-height:6.50px;color:#24262f;transform:scale(0.8822,1.0000);transform-origin:0 0;">BRIGHT SHIRT - L</div>
<div class="a" style="left:396.87px;top:276.18px;font-size:7.70px;line-height:7.70px;color:#2f3b68;-webkit-text-stroke:0;">68/68</div>
<div class="bd g" style="left:425.4px;top:276.20px;width:21.3px">100%</div>
<div class="a" style="left:452.37px;top:276.18px;font-size:7.70px;line-height:7.70px;color:#2f3b68;-webkit-text-stroke:0;">86/18</div>
<div class="bd g" style="left:488.3px;top:276.20px;width:22px">100%</div>
<div class="a" style="left:145.50px;top:286.90px;font-size:6.50px;line-height:6.50px;color:#24262f;transform:scale(0.9009,1.0000);transform-origin:0 0;">NURSE SHIRT - M</div>
<div class="a" style="left:213.07px;top:286.28px;font-size:7.70px;line-height:7.70px;color:#2f3b68;-webkit-text-stroke:0;">45/66</div>
<div class="tr" style="left:237.3px;top:286.30px;width:21.2px"></div>
<div class="bd g" style="left:237.3px;top:286.30px;width:14.7px">68%</div>
<div class="a" style="left:263.57px;top:286.28px;font-size:7.70px;line-height:7.70px;color:#2f3b68;-webkit-text-stroke:0;">19/45</div>
<div class="tr" style="left:295px;top:286.30px;width:21.7px"></div>
<div class="bd o" style="left:295px;top:286.30px;width:9.8px">53%</div>
<div class="a" style="left:330.30px;top:286.90px;font-size:6.50px;line-height:6.50px;color:#24262f;transform:scale(0.8822,1.0000);transform-origin:0 0;">BRIGHT SHIRT - M</div>
<div class="a" style="left:396.87px;top:286.28px;font-size:7.70px;line-height:7.70px;color:#2f3b68;-webkit-text-stroke:0;">69/68</div>
<div class="bd g" style="left:425.4px;top:286.30px;width:19.5px">87%</div>
<div class="a" style="left:452.37px;top:286.28px;font-size:7.70px;line-height:7.70px;color:#2f3b68;-webkit-text-stroke:0;">99/68</div>
<div class="bd g" style="left:488.3px;top:286.30px;width:22px">100%</div>
<div class="a" style="left:145.50px;top:297.00px;font-size:6.50px;line-height:6.50px;color:#24262f;transform:scale(0.9009,1.0000);transform-origin:0 0;">NURSE SHIRT - S</div>
<div class="a" style="left:213.07px;top:296.38px;font-size:7.70px;line-height:7.70px;color:#2f3b68;-webkit-text-stroke:0;">39/23</div>
<div class="tr" style="left:237.3px;top:296.40px;width:21.2px"></div>
<div class="bd r" style="left:237.3px;top:296.40px;width:9.7px">0%</div>
<div class="a" style="left:263.57px;top:296.38px;font-size:7.70px;line-height:7.70px;color:#2f3b68;-webkit-text-stroke:0;">23/23</div>
<div class="tr" style="left:295px;top:296.40px;width:21.7px"></div>
<div class="bd g" style="left:295px;top:296.40px;width:18px">100%</div>
<div class="a" style="left:330.30px;top:297.00px;font-size:6.50px;line-height:6.50px;color:#24262f;transform:scale(0.8822,1.0000);transform-origin:0 0;">BRIGHT SHIRT - S</div>
<div class="a" style="left:396.87px;top:296.38px;font-size:7.70px;line-height:7.70px;color:#2f3b68;-webkit-text-stroke:0;">68/68</div>
<div class="bd g" style="left:425.4px;top:296.40px;width:19.5px">87%</div>
<div class="a" style="left:452.37px;top:296.38px;font-size:7.70px;line-height:7.70px;color:#2f3b68;-webkit-text-stroke:0;">66/75</div>
<div class="bd g" style="left:488.3px;top:296.40px;width:19.5px">87%</div>
<div class="a" style="left:145.50px;top:307.10px;font-size:6.50px;line-height:6.50px;color:#24262f;transform:scale(0.9009,1.0000);transform-origin:0 0;">NURSE SHIRT - XL</div>
<div class="a" style="left:213.07px;top:306.48px;font-size:7.70px;line-height:7.70px;color:#2f3b68;-webkit-text-stroke:0;">36/56</div>
<div class="tr" style="left:237.3px;top:306.50px;width:21.2px"></div>
<div class="bd o" style="left:237.3px;top:306.50px;width:10.2px">53%</div>
<div class="a" style="left:263.57px;top:306.48px;font-size:7.70px;line-height:7.70px;color:#2f3b68;-webkit-text-stroke:0;">59/43</div>
<div class="tr" style="left:295px;top:306.50px;width:21.7px"></div>
<div class="bd o" style="left:295px;top:306.50px;width:12px">63%</div>
<div class="a" style="left:330.30px;top:307.10px;font-size:6.50px;line-height:6.50px;color:#24262f;transform:scale(0.8822,1.0000);transform-origin:0 0;">BRIGHT SHIRT - XL</div>
<div class="a" style="left:396.87px;top:306.48px;font-size:7.70px;line-height:7.70px;color:#2f3b68;-webkit-text-stroke:0;">46/43</div>
<div class="bd g" style="left:425.4px;top:306.50px;width:21.3px">100%</div>
<div class="a" style="left:452.37px;top:306.48px;font-size:7.70px;line-height:7.70px;color:#2f3b68;-webkit-text-stroke:0;">63/43</div>
<div class="bd g" style="left:488.3px;top:306.50px;width:22px">100%</div>
<div class="a" style="left:323.2px;top:325.5px;width:0.9px;height:84.5px;background:#eceef3"></div>
<div class="a" style="left:145.60px;top:330.04px;font-size:7.40px;line-height:7.40px;color:#26335e;font-weight:bold;transform:scale(0.9535,1.0000);transform-origin:0 0;">DISPENSER WAREHOUSE</div>
<div class="a" style="left:241.0px;top:328.8px;width:0.9px;height:8.2px;background:#26335e"></div>
<div class="a" style="left:244.70px;top:329.02px;font-size:8.60px;line-height:8.60px;color:#2f3a66;transform:scale(0.9377,1.0000);transform-origin:0 0;">Dw-531603322</div>
<div class="a" style="left:330.30px;top:330.04px;font-size:7.40px;line-height:7.40px;color:#26335e;font-weight:bold;transform:scale(0.8627,1.0000);transform-origin:0 0;">PEDIATRIC DISPENSER</div>
<div class="a" style="left:411.1px;top:328.8px;width:0.9px;height:8.2px;background:#26335e"></div>
<div class="a" style="left:414.60px;top:329.02px;font-size:8.60px;line-height:8.60px;color:#2f3a66;transform:scale(0.9395,1.0000);transform-origin:0 0;">Dw-531902050</div>
<div class="a" style="left:145.50px;top:348.40px;font-size:6.50px;line-height:6.50px;color:#24262f;transform:scale(0.9009,1.0000);transform-origin:0 0;">NURSE SHIRT - XS</div>
<div class="a" style="left:213.07px;top:347.78px;font-size:7.70px;line-height:7.70px;color:#2f3b68;-webkit-text-stroke:0;">63/33</div>
<div class="tr" style="left:237.3px;top:347.80px;width:21.2px"></div>
<div class="bd g" style="left:237.3px;top:347.80px;width:14px">68%</div>
<div class="a" style="left:265.71px;top:347.78px;font-size:7.70px;line-height:7.70px;color:#dd4b41;-webkit-text-stroke:0;">0/13</div>
<div class="tr" style="left:295px;top:347.80px;width:21.7px"></div>
<div class="bd r" style="left:295px;top:347.80px;width:10.5px">0%</div>
<div class="a" style="left:330.30px;top:348.40px;font-size:6.50px;line-height:6.50px;color:#24262f;transform:scale(0.8822,1.0000);transform-origin:0 0;">BRIGHT SHIRT - XS</div>
<div class="a" style="left:396.87px;top:347.78px;font-size:7.70px;line-height:7.70px;color:#2f3b68;-webkit-text-stroke:0;">64/68</div>
<div class="bd g" style="left:425.4px;top:347.80px;width:21.3px">98%</div>
<div class="a" style="left:452.37px;top:347.78px;font-size:7.70px;line-height:7.70px;color:#2f3b68;-webkit-text-stroke:0;">64/68</div>
<div class="bd g" style="left:488.3px;top:347.80px;width:22px">100%</div>
<div class="a" style="left:145.50px;top:358.50px;font-size:6.50px;line-height:6.50px;color:#24262f;transform:scale(0.9009,1.0000);transform-origin:0 0;">NURSE SHIRT - 2XL</div>
<div class="a" style="left:213.07px;top:357.88px;font-size:7.70px;line-height:7.70px;color:#2f3b68;-webkit-text-stroke:0;">10/23</div>
<div class="tr" style="left:237.3px;top:357.90px;width:21.2px"></div>
<div class="bd o" style="left:237.3px;top:357.90px;width:10.2px">68%</div>
<div class="a" style="left:265.71px;top:357.88px;font-size:7.70px;line-height:7.70px;color:#2f3b68;-webkit-text-stroke:0;">4/15</div>
<div class="tr" style="left:295px;top:357.90px;width:21.7px"></div>
<div class="bd o" style="left:295px;top:357.90px;width:10.5px">60%</div>
<div class="a" style="left:330.30px;top:358.50px;font-size:6.50px;line-height:6.50px;color:#24262f;transform:scale(0.8822,1.0000);transform-origin:0 0;">BRIGHT SHIRT - XL</div>
<div class="a" style="left:396.87px;top:357.88px;font-size:7.70px;line-height:7.70px;color:#2f3b68;-webkit-text-stroke:0;">69/68</div>
<div class="bd g" style="left:425.4px;top:357.90px;width:21.3px">100%</div>
<div class="a" style="left:452.37px;top:357.88px;font-size:7.70px;line-height:7.70px;color:#2f3b68;-webkit-text-stroke:0;">66/68</div>
<div class="bd g" style="left:488.3px;top:357.90px;width:20.5px">97%</div>
<div class="a" style="left:145.50px;top:368.60px;font-size:6.50px;line-height:6.50px;color:#dd4b41;transform:scale(0.9009,1.0000);transform-origin:0 0;">NURSE SHIRT - L</div>
<div class="a" style="left:213.07px;top:367.98px;font-size:7.70px;line-height:7.70px;color:#dd4b41;-webkit-text-stroke:0;">69/66</div>
<div class="tr" style="left:237.3px;top:368.00px;width:21.2px"></div>
<div class="bd r" style="left:237.3px;top:368.00px;width:9.7px">0%</div>
<div class="a" style="left:265.71px;top:367.98px;font-size:7.70px;line-height:7.70px;color:#dd4b41;-webkit-text-stroke:0;">6/13</div>
<div class="tr" style="left:295px;top:368.00px;width:21.7px"></div>
<div class="bd g" style="left:295px;top:368.00px;width:15px">68%</div>
<div class="a" style="left:330.30px;top:368.60px;font-size:6.50px;line-height:6.50px;color:#24262f;transform:scale(0.8822,1.0000);transform-origin:0 0;">BRIGHT SHIRT - L</div>
<div class="a" style="left:396.87px;top:367.98px;font-size:7.70px;line-height:7.70px;color:#2f3b68;-webkit-text-stroke:0;">68/68</div>
<div class="bd g" style="left:425.4px;top:368.00px;width:21.3px">100%</div>
<div class="a" style="left:452.37px;top:367.98px;font-size:7.70px;line-height:7.70px;color:#2f3b68;-webkit-text-stroke:0;">69/68</div>
<div class="bd g" style="left:488.3px;top:368.00px;width:22px">100%</div>
<div class="a" style="left:145.50px;top:378.70px;font-size:6.50px;line-height:6.50px;color:#24262f;transform:scale(0.9009,1.0000);transform-origin:0 0;">NURSE SHIRT - M</div>
<div class="a" style="left:213.07px;top:378.08px;font-size:7.70px;line-height:7.70px;color:#2f3b68;-webkit-text-stroke:0;">46/66</div>
<div class="tr" style="left:237.3px;top:378.10px;width:21.2px"></div>
<div class="bd g" style="left:237.3px;top:378.10px;width:14.7px">68%</div>
<div class="a" style="left:263.57px;top:378.08px;font-size:7.70px;line-height:7.70px;color:#2f3b68;-webkit-text-stroke:0;">19/43</div>
<div class="tr" style="left:295px;top:378.10px;width:21.7px"></div>
<div class="bd o" style="left:295px;top:378.10px;width:9.8px">60%</div>
<div class="a" style="left:330.30px;top:378.70px;font-size:6.50px;line-height:6.50px;color:#24262f;transform:scale(0.8822,1.0000);transform-origin:0 0;">BRIGHT SHIRT - M</div>
<div class="a" style="left:396.87px;top:378.08px;font-size:7.70px;line-height:7.70px;color:#2f3b68;-webkit-text-stroke:0;">69/68</div>
<div class="bd g" style="left:425.4px;top:378.10px;width:19.5px">87%</div>
<div class="a" style="left:452.37px;top:378.08px;font-size:7.70px;line-height:7.70px;color:#2f3b68;-webkit-text-stroke:0;">96/68</div>
<div class="bd g" style="left:488.3px;top:378.10px;width:22px">100%</div>
<div class="a" style="left:145.50px;top:388.80px;font-size:6.50px;line-height:6.50px;color:#24262f;transform:scale(0.9009,1.0000);transform-origin:0 0;">NURSE SHIRT - S</div>
<div class="a" style="left:213.07px;top:388.18px;font-size:7.70px;line-height:7.70px;color:#2f3b68;-webkit-text-stroke:0;">39/23</div>
<div class="tr" style="left:237.3px;top:388.20px;width:21.2px"></div>
<div class="bd r" style="left:237.3px;top:388.20px;width:9.7px">0%</div>
<div class="a" style="left:263.57px;top:388.18px;font-size:7.70px;line-height:7.70px;color:#2f3b68;-webkit-text-stroke:0;">23/23</div>
<div class="tr" style="left:295px;top:388.20px;width:21.7px"></div>
<div class="bd g" style="left:295px;top:388.20px;width:18px">88%</div>
<div class="a" style="left:330.30px;top:388.80px;font-size:6.50px;line-height:6.50px;color:#24262f;transform:scale(0.8822,1.0000);transform-origin:0 0;">BRIGHT SHIRT - S</div>
<div class="a" style="left:396.87px;top:388.18px;font-size:7.70px;line-height:7.70px;color:#2f3b68;-webkit-text-stroke:0;">66/68</div>
<div class="bd g" style="left:425.4px;top:388.20px;width:19.5px">87%</div>
<div class="a" style="left:452.37px;top:388.18px;font-size:7.70px;line-height:7.70px;color:#2f3b68;-webkit-text-stroke:0;">96/76</div>
<div class="bd g" style="left:488.3px;top:388.20px;width:19.5px">87%</div>
<div class="a" style="left:145.50px;top:398.90px;font-size:6.50px;line-height:6.50px;color:#24262f;transform:scale(0.9009,1.0000);transform-origin:0 0;">NURSE SHIRT - XL</div>
<div class="a" style="left:213.07px;top:398.28px;font-size:7.70px;line-height:7.70px;color:#2f3b68;-webkit-text-stroke:0;">36/94</div>
<div class="tr" style="left:237.3px;top:398.30px;width:21.2px"></div>
<div class="bd o" style="left:237.3px;top:398.30px;width:10.2px">53%</div>
<div class="a" style="left:263.57px;top:398.28px;font-size:7.70px;line-height:7.70px;color:#2f3b68;-webkit-text-stroke:0;">18/43</div>
<div class="tr" style="left:295px;top:398.30px;width:21.7px"></div>
<div class="bd o" style="left:295px;top:398.30px;width:12px">63%</div>
<div class="a" style="left:330.30px;top:398.90px;font-size:6.50px;line-height:6.50px;color:#24262f;transform:scale(0.8822,1.0000);transform-origin:0 0;">BRIGHT SHIRT - XL</div>
<div class="a" style="left:396.87px;top:398.28px;font-size:7.70px;line-height:7.70px;color:#2f3b68;-webkit-text-stroke:0;">46/43</div>
<div class="bd g" style="left:425.4px;top:398.30px;width:21.3px">100%</div>
<div class="a" style="left:452.37px;top:398.28px;font-size:7.70px;line-height:7.70px;color:#2f3b68;-webkit-text-stroke:0;">43/43</div>
<div class="bd g" style="left:488.3px;top:398.30px;width:22px">100%</div>
<div class="a" style="left:323.2px;top:433px;width:0.9px;height:67px;background:#eceef3"></div>
<div class="a" style="left:145.60px;top:437.54px;font-size:7.40px;line-height:7.40px;color:#26335e;font-weight:bold;transform:scale(0.9857,1.0000);transform-origin:0 0;">DISPENSER WAREHOUSE</div>
<div class="a" style="left:242.0px;top:436.3px;width:0.9px;height:8.2px;background:#26335e"></div>
<div class="a" style="left:245.30px;top:436.52px;font-size:8.60px;line-height:8.60px;color:#2f3a66;transform:scale(0.9377,1.0000);transform-origin:0 0;">Dw-531603322</div>
<div class="a" style="left:330.30px;top:437.54px;font-size:7.40px;line-height:7.40px;color:#26335e;font-weight:bold;transform:scale(0.8627,1.0000);transform-origin:0 0;">PEDIATRIC DISPENSER</div>
<div class="a" style="left:411.1px;top:436.3px;width:0.9px;height:8.2px;background:#26335e"></div>
<div class="a" style="left:414.60px;top:436.52px;font-size:8.60px;line-height:8.60px;color:#2f3a66;transform:scale(0.9395,1.0000);transform-origin:0 0;">Dw-531902050</div>
<div class="a" style="left:145.50px;top:456.00px;font-size:6.50px;line-height:6.50px;color:#24262f;transform:scale(0.9009,1.0000);transform-origin:0 0;">NURSE SHIRT - XS</div>
<div class="a" style="left:213.07px;top:455.38px;font-size:7.70px;line-height:7.70px;color:#2f3b68;-webkit-text-stroke:0;">63/63</div>
<div class="tr" style="left:237.3px;top:455.40px;width:21.2px"></div>
<div class="bd g" style="left:237.3px;top:455.40px;width:14px">68%</div>
<div class="a" style="left:265.71px;top:455.38px;font-size:7.70px;line-height:7.70px;color:#dd4b41;-webkit-text-stroke:0;">0/15</div>
<div class="tr" style="left:295px;top:455.40px;width:21.7px"></div>
<div class="bd r" style="left:295px;top:455.40px;width:10.5px">0%</div>
<div class="a" style="left:330.30px;top:456.00px;font-size:6.50px;line-height:6.50px;color:#24262f;transform:scale(0.8822,1.0000);transform-origin:0 0;">BRIGHT SHIRT - XS</div>
<div class="a" style="left:396.87px;top:455.38px;font-size:7.70px;line-height:7.70px;color:#2f3b68;-webkit-text-stroke:0;">46/68</div>
<div class="bd g" style="left:425.4px;top:455.40px;width:21.3px">94%</div>
<div class="a" style="left:452.37px;top:455.38px;font-size:7.70px;line-height:7.70px;color:#2f3b68;-webkit-text-stroke:0;">64/68</div>
<div class="bd g" style="left:488.3px;top:455.40px;width:22px">100%</div>
<div class="a" style="left:145.50px;top:466.20px;font-size:6.50px;line-height:6.50px;color:#24262f;transform:scale(0.9009,1.0000);transform-origin:0 0;">NURSE SHIRT - 2XL</div>
<div class="a" style="left:213.07px;top:465.58px;font-size:7.70px;line-height:7.70px;color:#2f3b68;-webkit-text-stroke:0;">10/23</div>
<div class="tr" style="left:237.3px;top:465.60px;width:21.2px"></div>
<div class="bd o" style="left:237.3px;top:465.60px;width:10.2px">53%</div>
<div class="a" style="left:265.71px;top:465.58px;font-size:7.70px;line-height:7.70px;color:#2f3b68;-webkit-text-stroke:0;">4/13</div>
<div class="tr" style="left:295px;top:465.60px;width:21.7px"></div>
<div class="bd o" style="left:295px;top:465.60px;width:10.5px">52%</div>
<div class="a" style="left:330.30px;top:466.20px;font-size:6.50px;line-height:6.50px;color:#24262f;transform:scale(0.8822,1.0000);transform-origin:0 0;">BRIGHT SHIRT - XL</div>
<div class="a" style="left:396.87px;top:465.58px;font-size:7.70px;line-height:7.70px;color:#2f3b68;-webkit-text-stroke:0;">69/68</div>
<div class="bd g" style="left:425.4px;top:465.60px;width:21.3px">100%</div>
<div class="a" style="left:452.37px;top:465.58px;font-size:7.70px;line-height:7.70px;color:#2f3b68;-webkit-text-stroke:0;">66/68</div>
<div class="bd g" style="left:488.3px;top:465.60px;width:20.5px">97%</div>
<div class="a" style="left:145.50px;top:476.40px;font-size:6.50px;line-height:6.50px;color:#dd4b41;transform:scale(0.9009,1.0000);transform-origin:0 0;">NURSE SHIRT - L</div>
<div class="a" style="left:213.07px;top:475.78px;font-size:7.70px;line-height:7.70px;color:#dd4b41;-webkit-text-stroke:0;">67/66</div>
<div class="tr" style="left:237.3px;top:475.80px;width:21.2px"></div>
<div class="bd r" style="left:237.3px;top:475.80px;width:9.7px">0%</div>
<div class="a" style="left:265.71px;top:475.78px;font-size:7.70px;line-height:7.70px;color:#2f3b68;-webkit-text-stroke:0;">0/43</div>
<div class="tr" style="left:295px;top:475.80px;width:21.7px"></div>
<div class="bd g" style="left:295px;top:475.80px;width:15px">63%</div>
<div class="a" style="left:330.30px;top:476.40px;font-size:6.50px;line-height:6.50px;color:#24262f;transform:scale(0.8822,1.0000);transform-origin:0 0;">BRIGHT SHIRT - L</div>
<div class="a" style="left:396.87px;top:475.78px;font-size:7.70px;line-height:7.70px;color:#2f3b68;-webkit-text-stroke:0;">66/68</div>
<div class="bd g" style="left:425.4px;top:475.80px;width:21.3px">100%</div>
<div class="a" style="left:452.37px;top:475.78px;font-size:7.70px;line-height:7.70px;color:#2f3b68;-webkit-text-stroke:0;">66/78</div>
<div class="bd g" style="left:488.3px;top:475.80px;width:22px">100%</div>
<div class="a" style="left:145.50px;top:486.60px;font-size:6.50px;line-height:6.50px;color:#24262f;transform:scale(0.9009,1.0000);transform-origin:0 0;">NURSE SHIRT - M</div>
<div class="a" style="left:213.07px;top:485.98px;font-size:7.70px;line-height:7.70px;color:#2f3b68;-webkit-text-stroke:0;">46/65</div>
<div class="tr" style="left:237.3px;top:486.00px;width:21.2px"></div>
<div class="bd g" style="left:237.3px;top:486.00px;width:14.7px">68%</div>
<div class="a" style="left:263.57px;top:485.98px;font-size:7.70px;line-height:7.70px;color:#2f3b68;-webkit-text-stroke:0;">19/43</div>
<div class="tr" style="left:295px;top:486.00px;width:21.7px"></div>
<div class="bd o" style="left:295px;top:486.00px;width:9.8px">60%</div>
<div class="a" style="left:330.30px;top:486.60px;font-size:6.50px;line-height:6.50px;color:#24262f;transform:scale(0.8822,1.0000);transform-origin:0 0;">BRIGHT SHIRT - M</div>
<div class="a" style="left:396.87px;top:485.98px;font-size:7.70px;line-height:7.70px;color:#2f3b68;-webkit-text-stroke:0;">69/68</div>
<div class="bd g" style="left:425.4px;top:486.00px;width:19.5px">87%</div>
<div class="a" style="left:452.37px;top:485.98px;font-size:7.70px;line-height:7.70px;color:#2f3b68;-webkit-text-stroke:0;">99/68</div>
<div class="bd g" style="left:488.3px;top:486.00px;width:22px">100%</div>
<div class="a" style="left:145.50px;top:496.80px;font-size:6.50px;line-height:6.50px;color:#24262f;transform:scale(0.9009,1.0000);transform-origin:0 0;">NURSE SHIRT - S</div>
<div class="a" style="left:213.07px;top:496.18px;font-size:7.70px;line-height:7.70px;color:#2f3b68;-webkit-text-stroke:0;">39/33</div>
<div class="tr" style="left:237.3px;top:496.20px;width:21.2px"></div>
<div class="bd r" style="left:237.3px;top:496.20px;width:9.7px">0%</div>
<div class="a" style="left:263.57px;top:496.18px;font-size:7.70px;line-height:7.70px;color:#2f3b68;-webkit-text-stroke:0;">23/23</div>
<div class="tr" style="left:295px;top:496.20px;width:21.7px"></div>
<div class="bd g" style="left:295px;top:496.20px;width:18px">88%</div>
<div class="a" style="left:330.30px;top:496.80px;font-size:6.50px;line-height:6.50px;color:#24262f;transform:scale(0.8822,1.0000);transform-origin:0 0;">BRIGHT SHIRT - S</div>
<div class="a" style="left:396.87px;top:496.18px;font-size:7.70px;line-height:7.70px;color:#2f3b68;-webkit-text-stroke:0;">66/69</div>
<div class="bd g" style="left:425.4px;top:496.20px;width:21.3px">100%</div>
<div class="a" style="left:452.37px;top:496.18px;font-size:7.70px;line-height:7.70px;color:#2f3b68;-webkit-text-stroke:0;">43/43</div>
<div class="bd g" style="left:488.3px;top:496.20px;width:19.5px">87%</div>
<div class="card" style="left:525px;top:229px;width:265px;height:245px"></div>
<div class="a" style="left:535.40px;top:238.07px;font-size:9.60px;line-height:9.60px;color:#2a3553;transform:scale(0.9980,1.0000);transform-origin:0 0;">Consumption Summary</div>
<div class="a" style="left:654.90px;top:240.51px;font-size:7.20px;line-height:7.20px;color:#262d4d;transform:scale(0.8925,1.0000);transform-origin:0 0;-webkit-text-stroke:0.15px #262d4d;">04/11/2022 12:00 AM - 04/18/2021 11:59 PM</div>
<div class="a" style="left:535.00px;top:264.86px;font-size:6.90px;line-height:6.90px;color:#3a3f50;transform:scale(1.0027,1.0000);transform-origin:0 0;">Period</div>
<div class="a" style="left:559px;top:260px;width:90px;height:15.8px;border-radius:2.5px;background:#eef0f6"></div>
<div class="a" style="left:563.50px;top:264.64px;font-size:7.40px;line-height:7.40px;color:#2a3553;transform:scale(0.9907,1.0000);transform-origin:0 0;">Last Week</div>
<svg class="a" style="left:640px;top:266.6px" width="5" height="3" viewBox="0 0 5 3"><path d="M0 0H5L2.5 3Z" fill="#2a3553"/></svg>
<div class="a" style="left:657.00px;top:264.77px;font-size:7.00px;line-height:7.00px;color:#3a3f50;transform:scale(1.0072,1.0000);transform-origin:0 0;">Group by</div>
<div class="a" style="left:690px;top:260px;width:93px;height:15.5px;border-radius:2.5px;background:#eef0f6"></div>
<div class="a" style="left:695.00px;top:264.64px;font-size:7.40px;line-height:7.40px;color:#2a3553;">Item</div>
<svg class="a" style="left:774.5px;top:266.6px" width="5" height="3" viewBox="0 0 5 3"><path d="M0 0H5L2.5 3Z" fill="#2a3553"/></svg>
<svg class="a" style="left:0;top:0" width="800" height="500" viewBox="0 0 800 500"><line x1="551" y1="434.2" x2="748" y2="434.2" stroke="#e4e6ec" stroke-width="0.7"/><text x="549.8" y="436.5" font-size="6.6" fill="#3f4250" text-anchor="end" font-family="Liberation Sans">0</text><line x1="551" y1="409.7" x2="748" y2="409.7" stroke="#e4e6ec" stroke-width="0.7"/><text x="549.8" y="412.0" font-size="6.6" fill="#3f4250" text-anchor="end" font-family="Liberation Sans">500</text><line x1="551" y1="385.2" x2="748" y2="385.2" stroke="#e4e6ec" stroke-width="0.7"/><text x="549.8" y="387.5" font-size="6.6" fill="#3f4250" text-anchor="end" font-family="Liberation Sans">1000</text><line x1="551" y1="360.7" x2="748" y2="360.7" stroke="#e4e6ec" stroke-width="0.7"/><text x="549.8" y="363.0" font-size="6.6" fill="#3f4250" text-anchor="end" font-family="Liberation Sans">1500</text><line x1="551" y1="336.2" x2="748" y2="336.2" stroke="#e4e6ec" stroke-width="0.7"/><text x="549.8" y="338.5" font-size="6.6" fill="#3f4250" text-anchor="end" font-family="Liberation Sans">2000</text><line x1="551" y1="311.7" x2="748" y2="311.7" stroke="#e4e6ec" stroke-width="0.7"/><text x="549.8" y="314.0" font-size="6.6" fill="#3f4250" text-anchor="end" font-family="Liberation Sans">2500</text><line x1="551" y1="287.2" x2="748" y2="287.2" stroke="#e4e6ec" stroke-width="0.7"/><text x="549.8" y="289.5" font-size="6.6" fill="#3f4250" text-anchor="end" font-family="Liberation Sans">3000</text><line x1="584.4" y1="287.2" x2="584.4" y2="437" stroke="#e4e6ec" stroke-width="0.7"/><line x1="612.6" y1="287.2" x2="612.6" y2="437" stroke="#e4e6ec" stroke-width="0.7"/><line x1="642.1" y1="287.2" x2="642.1" y2="437" stroke="#e4e6ec" stroke-width="0.7"/><line x1="669.6" y1="287.2" x2="669.6" y2="437" stroke="#e4e6ec" stroke-width="0.7"/><line x1="697" y1="287.2" x2="697" y2="437" stroke="#e4e6ec" stroke-width="0.7"/><line x1="724.4" y1="287.2" x2="724.4" y2="437" stroke="#e4e6ec" stroke-width="0.7"/><line x1="748" y1="287.2" x2="748" y2="437" stroke="#e4e6ec" stroke-width="0.7"/><line x1="554.8" y1="287.2" x2="554.8" y2="437" stroke="#d4d6dd" stroke-width="0.8"/><line x1="551" y1="434.2" x2="748" y2="434.2" stroke="#d4d6dd" stroke-width="0.8"/><rect x="558.8" y="305.2" width="20.7" height="48.10" fill="#b2b9cd"/><rect x="558.8" y="353.3" width="20.7" height="7.20" fill="#f8cf8f"/><rect x="558.8" y="360.5" width="20.7" height="6.00" fill="#7fc6c8"/><rect x="558.8" y="366.5" width="20.7" height="6.50" fill="#f1897c"/><rect x="558.8" y="373" width="20.7" height="7.30" fill="#e7e7e9"/><rect x="558.8" y="380.3" width="20.7" height="8.70" fill="#b7cde0"/><rect x="558.8" y="389" width="20.7" height="7.20" fill="#7fc6c8"/><rect x="558.8" y="396.2" width="20.7" height="8.80" fill="#efefef"/><rect x="558.8" y="405" width="20.7" height="7.20" fill="#3d4046"/><rect x="558.8" y="412.2" width="20.7" height="11.40" fill="#15284a"/><rect x="558.8" y="423.6" width="20.7" height="10.60" fill="#f18a45"/><rect x="588" y="313.3" width="20.7" height="47.70" fill="#b2b9cd"/><rect x="588" y="361" width="20.7" height="5.50" fill="#f8cf8f"/><rect x="588" y="366.5" width="20.7" height="6.10" fill="#7fc6c8"/><rect x="588" y="372.6" width="20.7" height="7.10" fill="#f1897c"/><rect x="588" y="379.7" width="20.7" height="7.30" fill="#e7e7e9"/><rect x="588" y="387" width="20.7" height="7.60" fill="#b7cde0"/><rect x="588" y="394.6" width="20.7" height="7.00" fill="#7fc6c8"/><rect x="588" y="401.6" width="20.7" height="7.70" fill="#efefef"/><rect x="588" y="409.3" width="20.7" height="6.70" fill="#3d4046"/><rect x="588" y="416" width="20.7" height="8.70" fill="#15284a"/><rect x="588" y="424.7" width="20.7" height="9.50" fill="#f18a45"/><rect x="617" y="312" width="20.8" height="44.60" fill="#b2b9cd"/><rect x="617" y="356.6" width="20.8" height="6.60" fill="#f8cf8f"/><rect x="617" y="363.2" width="20.8" height="6.60" fill="#7fc6c8"/><rect x="617" y="369.8" width="20.8" height="7.00" fill="#f1897c"/><rect x="617" y="376.8" width="20.8" height="7.90" fill="#e7e7e9"/><rect x="617" y="384.7" width="20.8" height="8.80" fill="#b7cde0"/><rect x="617" y="393.5" width="20.8" height="6.40" fill="#7fc6c8"/><rect x="617" y="399.9" width="20.8" height="7.90" fill="#efefef"/><rect x="617" y="407.8" width="20.8" height="7.50" fill="#3d4046"/><rect x="617" y="415.3" width="20.8" height="9.00" fill="#15284a"/><rect x="617" y="424.3" width="20.8" height="9.90" fill="#f18a45"/><rect x="645.8" y="326.5" width="19.4" height="43.50" fill="#b2b9cd"/><rect x="645.8" y="370" width="19.4" height="5.00" fill="#f8cf8f"/><rect x="645.8" y="375" width="19.4" height="5.50" fill="#7fc6c8"/><rect x="645.8" y="380.5" width="19.4" height="7.50" fill="#f1897c"/><rect x="645.8" y="388" width="19.4" height="4.70" fill="#e7e7e9"/><rect x="645.8" y="392.7" width="19.4" height="7.30" fill="#b7cde0"/><rect x="645.8" y="400" width="19.4" height="5.70" fill="#7fc6c8"/><rect x="645.8" y="405.7" width="19.4" height="6.50" fill="#efefef"/><rect x="645.8" y="412.2" width="19.4" height="7.30" fill="#3d4046"/><rect x="645.8" y="419.5" width="19.4" height="7.00" fill="#15284a"/><rect x="645.8" y="426.5" width="19.4" height="7.70" fill="#f18a45"/><rect x="672.5" y="380.3" width="20.0" height="23.30" fill="#b2b9cd"/><rect x="672.5" y="403.6" width="20.0" height="3.90" fill="#f8cf8f"/><rect x="672.5" y="407.5" width="20.0" height="3.50" fill="#f1897c"/><rect x="672.5" y="411" width="20.0" height="2.50" fill="#f4f4f5"/><rect x="672.5" y="413.5" width="20.0" height="5.20" fill="#7fc6c8"/><rect x="672.5" y="418.7" width="20.0" height="3.30" fill="#f4f4f5"/><rect x="672.5" y="422" width="20.0" height="6.60" fill="#3d4046"/><rect x="672.5" y="428.6" width="20.0" height="3.10" fill="#15284a"/><rect x="672.5" y="431.7" width="20.0" height="2.50" fill="#f18a45"/><rect x="700.6" y="326" width="19.7" height="49.30" fill="#b2b9cd"/><rect x="700.6" y="375.3" width="19.7" height="4.70" fill="#f8cf8f"/><rect x="700.6" y="380" width="19.7" height="5.00" fill="#7fc6c8"/><rect x="700.6" y="385" width="19.7" height="5.70" fill="#f1897c"/><rect x="700.6" y="390.7" width="19.7" height="5.60" fill="#e7e7e9"/><rect x="700.6" y="396.3" width="19.7" height="8.40" fill="#b7cde0"/><rect x="700.6" y="404.7" width="19.7" height="6.70" fill="#7fc6c8"/><rect x="700.6" y="411.4" width="19.7" height="5.00" fill="#f4f4f5"/><rect x="700.6" y="416.4" width="19.7" height="6.60" fill="#4b9cc2"/><rect x="700.6" y="423" width="19.7" height="4.00" fill="#f4f4f5"/><rect x="700.6" y="427" width="19.7" height="4.80" fill="#3d4046"/><rect x="700.6" y="431.8" width="19.7" height="2.40" fill="#f18a45"/><rect x="727.8" y="423.4" width="18.2" height="5.60" fill="#7fc6c8"/><rect x="727.8" y="429" width="18.2" height="1.00" fill="#f4f4f5"/><rect x="727.8" y="430" width="18.2" height="4.20" fill="#15284a"/><text x="569.1" y="443.3" font-size="6.1" fill="#3f4250" text-anchor="middle" font-family="Liberation Sans">11/04</text><text x="598.4" y="443.3" font-size="6.1" fill="#3f4250" text-anchor="middle" font-family="Liberation Sans">12/04</text><text x="627.4" y="443.3" font-size="6.1" fill="#3f4250" text-anchor="middle" font-family="Liberation Sans">15/04</text><text x="655.5" y="443.3" font-size="6.1" fill="#3f4250" text-anchor="middle" font-family="Liberation Sans">14/04</text><text x="682.5" y="443.3" font-size="6.1" fill="#3f4250" text-anchor="middle" font-family="Liberation Sans">15/04</text><text x="710.5" y="443.3" font-size="6.1" fill="#3f4250" text-anchor="middle" font-family="Liberation Sans">16/04</text><text x="736.9" y="443.3" font-size="6.1" fill="#3f4250" text-anchor="middle" font-family="Liberation Sans">17/04</text></svg>
<div class="lg" style="left:740.7px;top:303.1px;width:6px;height:5.6px;background:#f18a45"></div>
<div class="a" style="left:749.30px;top:304.08px;font-size:8.80px;line-height:8.80px;color:#2c2f3a;transform:scale(0.4650,0.5000);transform-origin:0 0;-webkit-text-stroke:0.05px #2c2f3a;">BRIGHT SHIRT - M</div>
<div class="lg" style="left:740.7px;top:313.3px;width:6px;height:5.6px;background:#15284a"></div>
<div class="a" style="left:749.30px;top:314.28px;font-size:8.80px;line-height:8.80px;color:#2c2f3a;transform:scale(0.4650,0.5000);transform-origin:0 0;-webkit-text-stroke:0.05px #2c2f3a;">BRIGHT SHIRT - S</div>
<div class="lg" style="left:740.7px;top:323.5px;width:6px;height:5.6px;background:#15284a"></div>
<div class="a" style="left:749.30px;top:324.48px;font-size:8.80px;line-height:8.80px;color:#2c2f3a;transform:scale(0.4650,0.5000);transform-origin:0 0;-webkit-text-stroke:0.05px #2c2f3a;">BLUE TROUSERS - S</div>
<div class="lg" style="left:740.7px;top:333.7px;width:6px;height:5.6px;background:#6cb4c2"></div>
<div class="a" style="left:749.30px;top:334.68px;font-size:8.80px;line-height:8.80px;color:#2c2f3a;transform:scale(0.4650,0.5000);transform-origin:0 0;-webkit-text-stroke:0.05px #2c2f3a;">BLUE TROUSERS - M</div>
<div class="lg" style="left:740.7px;top:343.9px;width:6px;height:5.6px;background:#f8cf8f"></div>
<div class="a" style="left:749.30px;top:344.88px;font-size:8.80px;line-height:8.80px;color:#2c2f3a;transform:scale(0.4650,0.5000);transform-origin:0 0;-webkit-text-stroke:0.05px #2c2f3a;">BRIGHT SHIRT - S</div>
<div class="lg" style="left:740.7px;top:354.1px;width:6px;height:5.6px;background:#4b9cc2"></div>
<div class="a" style="left:749.30px;top:355.08px;font-size:8.80px;line-height:8.80px;color:#2c2f3a;transform:scale(0.4650,0.5000);transform-origin:0 0;-webkit-text-stroke:0.05px #2c2f3a;">SINGLE SHIRT - L</div>
<div class="lg" style="left:740.7px;top:364.3px;width:6px;height:5.6px;background:#7fc6c8"></div>
<div class="a" style="left:749.30px;top:365.28px;font-size:8.80px;line-height:8.80px;color:#2c2f3a;transform:scale(0.4650,0.5000);transform-origin:0 0;-webkit-text-stroke:0.05px #2c2f3a;">SINGLE SHIRT - M</div>
<div class="lg" style="left:740.7px;top:374.5px;width:6px;height:5.6px;background:#f1897c"></div>
<div class="a" style="left:749.30px;top:375.48px;font-size:8.80px;line-height:8.80px;color:#2c2f3a;transform:scale(0.4650,0.5000);transform-origin:0 0;-webkit-text-stroke:0.05px #2c2f3a;">NURSE SHIRT - M</div>
<div class="lg" style="left:740.7px;top:384.7px;width:6px;height:5.6px;background:#f8c55a"></div>
<div class="a" style="left:749.30px;top:385.68px;font-size:8.80px;line-height:8.80px;color:#2c2f3a;transform:scale(0.4650,0.5000);transform-origin:0 0;-webkit-text-stroke:0.05px #2c2f3a;">NURSE SHIRT - S</div>
<div class="lg" style="left:740.7px;top:394.9px;width:6px;height:5.6px;background:#3d8bb0"></div>
<div class="a" style="left:749.30px;top:395.88px;font-size:8.80px;line-height:8.80px;color:#2c2f3a;transform:scale(0.4650,0.5000);transform-origin:0 0;-webkit-text-stroke:0.05px #2c2f3a;">BRIGHT SHIRT - L</div>
<div class="lg" style="left:740.7px;top:405.1px;width:6px;height:5.6px;background:#15284a"></div>
<div class="a" style="left:749.30px;top:406.08px;font-size:8.80px;line-height:8.80px;color:#2c2f3a;transform:scale(0.4650,0.5000);transform-origin:0 0;-webkit-text-stroke:0.05px #2c2f3a;">BLUE TROUSERS - S</div>
<div class="lg" style="left:740.7px;top:415.3px;width:6px;height:5.6px;background:#4a4a4c"></div>
<div class="a" style="left:749.30px;top:416.28px;font-size:8.80px;line-height:8.80px;color:#2c2f3a;transform:scale(0.4650,0.5000);transform-origin:0 0;-webkit-text-stroke:0.05px #2c2f3a;">OTHER</div>
</body></html>
